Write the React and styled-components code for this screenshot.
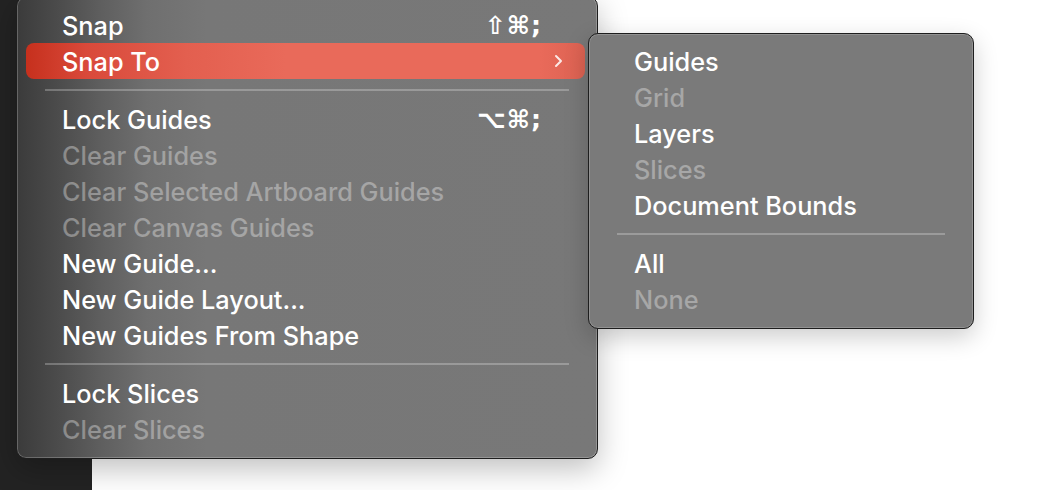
import styled, { createGlobalStyle } from 'styled-components'

const GlobalStyle = createGlobalStyle`
    body {
        margin: 0;
        background: #fff;
        font-family: Inter, "Noto Sans", "DejaVu Sans", sans-serif;
    }
`

const Page = styled.div`
    position: relative;
    display: flex;
    width: 1060px;
    height: 490px;
    overflow: hidden;
`
const Sidebar = styled.div`
    width: 92px;
    background: #232323;
`
const Canvas = styled.div`
    flex: 1;
    background: #fff;
`
const Menu = styled.div`
    position: absolute;
    box-sizing: border-box;
    left: 16px;
    top: -4px;
    width: 582px;
    padding: 10px 0 11px;
    border-radius: 10px;
    border: 1px solid #1e1e1e;
    background: linear-gradient(90deg, #3b3b3b 0px, #4b4b4b 40px, #5f5f5f 85px, #6f6f6f 130px, #777 190px, #787878 100%);
    box-shadow: inset 0 0 0 1px rgba(255,255,255,0.22), 0 10px 30px rgba(0,0,0,0.25);
`
const SubMenu = styled(Menu)`
    left: 588px;
    top: 33px;
    width: 386px;
    padding: 9px 0 11px;
    background: #7a7a7a;
    box-shadow: inset 0 0 0 1px rgba(255,255,255,0.18), 0 8px 24px rgba(0,0,0,0.2);
    z-index: 2;
`
const Row = styled.div`
    display: flex;
    align-items: center;
    height: 36px;
    margin: 0 12px 0 9px;
    padding: 0 22px 0 36px;
    border-radius: 8px;
    font-size: 25.3px;
    font-weight: 500;
    color: ${p => (p.$disabled ? 'rgba(255,255,255,0.34)' : '#fff')};
    background: ${p => (p.$active ? 'linear-gradient(90deg, #c6301d 0px, #d9493a 60px, #e35f4f 160px, #e96a5a 260px, #e96a5a 92%, #dc6252 100%)' : 'transparent')};
`
const Label = styled.span`
    flex: 1;
    white-space: nowrap;
`
const Shortcut = styled.span`
    font-family: "DejaVu Sans", sans-serif;
    font-size: 25px;
    font-weight: bold;
    letter-spacing: 1px;
    margin-right: 12px;
`
const Chevron = styled.span`
    display: flex;
    width: 9px;
    color: rgba(255,255,255,0.85);
`
const Separator = styled.div`
    height: 2px;
    margin: 10px 28px;
    background: rgba(255,255,255,0.25);
`

const mainItems = [
    { label: 'Snap', keys: '⇧⌘;' },
    { label: 'Snap To', active: true, sub: true },
    { sep: true },
    { label: 'Lock Guides', keys: '⌥⌘;' },
    { label: 'Clear Guides', disabled: true },
    { label: 'Clear Selected Artboard Guides', disabled: true },
    { label: 'Clear Canvas Guides', disabled: true },
    { label: 'New Guide...' },
    { label: 'New Guide Layout...' },
    { label: 'New Guides From Shape' },
    { sep: true },
    { label: 'Lock Slices' },
    { label: 'Clear Slices', disabled: true },
]

const subItems = [
    { label: 'Guides' },
    { label: 'Grid', disabled: true },
    { label: 'Layers' },
    { label: 'Slices', disabled: true },
    { label: 'Document Bounds' },
    { sep: true },
    { label: 'All' },
    { label: 'None', disabled: true },
]

function Items({ items }) {
    return items.map((item, i) =>
        item.sep ? (
            <Separator key={i} />
        ) : (
            <Row key={i} $active={item.active} $disabled={item.disabled}>
                <Label>{item.label}</Label>
                {item.keys && <Shortcut>{item.keys}</Shortcut>}
                <Chevron>
                    {item.sub && (
                        <svg width="9" height="14" viewBox="0 0 9 14">
                            <path d="M2 2 L7 7 L2 12" fill="none" stroke="currentColor" strokeWidth="2" strokeLinecap="round" strokeLinejoin="round" />
                        </svg>
                    )}
                </Chevron>
            </Row>
        )
    )
}

export default function App() {
    return (
        <Page>
            <GlobalStyle />
            <Sidebar />
            <Canvas />
            <Menu>
                <Items items={mainItems} />
            </Menu>
            <SubMenu>
                <Items items={subItems} />
            </SubMenu>
        </Page>
    )
}
